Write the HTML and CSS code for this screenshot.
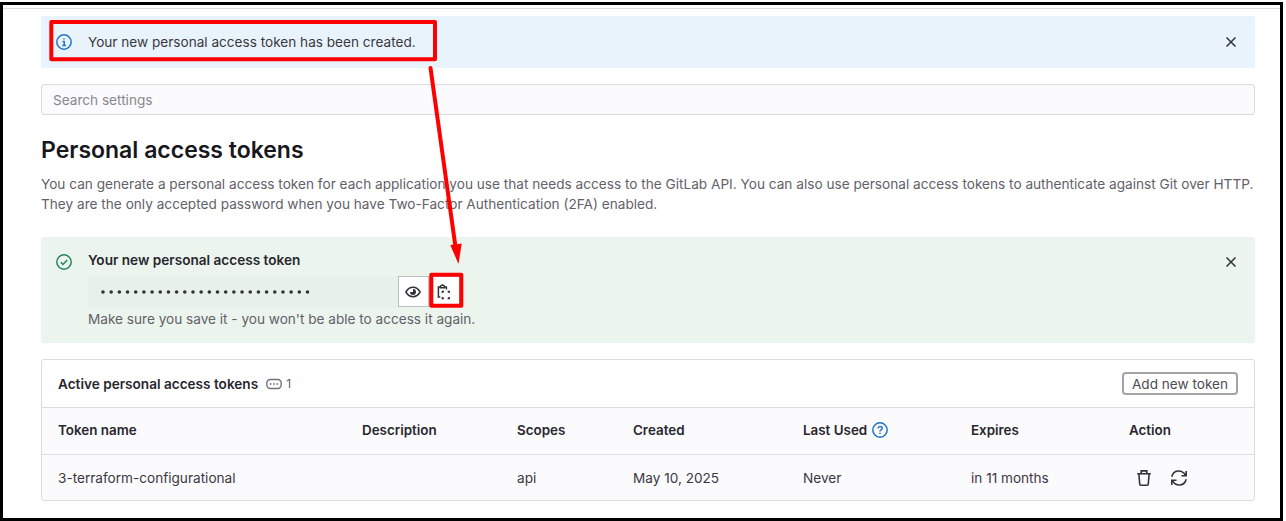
FILE: index.html
```html
<!DOCTYPE html>
<html lang="en">
<head>
<meta charset="utf-8">
<title>Personal access tokens</title>
<link rel="stylesheet" href="styles.css">
</head>
<body>
<div class="frame">
  <main class="page">
    <section class="alert alert-info">
      <svg class="icon blue" viewBox="0 0 16 16"><circle cx="8" cy="8" r="7.2"/><path d="M6.5 7.5H8.2V11.2M6.2 11.4H10M8 4.2V5.6" /></svg>
      <p class="alert-text">Your new personal access token has been created.</p>
      <svg class="icon close" viewBox="0 0 16 16"><path d="M3.5 3.5l9 9M12.5 3.5l-9 9"/></svg>
    </section>
    <div class="search">Search settings</div>
    <h1 class="title">Personal access tokens</h1>
    <p class="intro">You can generate a personal access token for each application you use that needs access to the GitLab API. You can also use personal access tokens to authenticate against Git over HTTP.<br>They are the only accepted password when you have Two-Factor Authentication (2FA) enabled.</p>
    <section class="alert alert-success">
      <svg class="icon green" viewBox="0 0 16 16"><circle cx="8" cy="8" r="7.2"/><path d="M4.8 8.2l2.2 2.2 4.2-4.3"/></svg>
      <div class="token">
        <h2 class="token-title">Your new personal access token</h2>
        <div class="token-row">
          <div class="token-value"><svg class="dots" viewBox="0 0 214 6"><path d="M3 3H210"/></svg></div>
          <button class="tool"><svg class="icon" viewBox="0 0 16 16"><path d="M.9 8C2.7 4.9 5.1 3.3 8 3.3S13.3 4.9 15.1 8C13.3 11.1 10.9 12.7 8 12.7S2.7 11.1.9 8z"/><path class="solid" d="M8 5a3 3 0 1 1-3 3h3z"/></svg></button>
          <button class="tool"><svg class="icon" viewBox="0 0 16 16"><path d="M4.3 13H2.4V3H4.2M8.6 3H10.4V5.6M4.4 3.8V2.2L6.4.9l2 1.3v1.6z"/><path d="M6.4 9V7.4H8M11.6 7.4H13.2V9M6.4 13V14.6H8M13.2 13V14.6H11.6"/></svg></button>
        </div>
        <p class="token-note">Make sure you save it - you won't be able to access it again.</p>
      </div>
      <svg class="icon close" viewBox="0 0 16 16"><path d="M3.5 3.5l9 9M12.5 3.5l-9 9"/></svg>
    </section>
    <section class="card">
      <header class="card-header">
        <h2 class="card-title">Active personal access tokens</h2>
        <svg class="icon count-icon" viewBox="0 0 16 16"><rect x=".8" y="3.5" width="14.4" height="9" rx="3.5"/><path d="M3.8 8h1.7M7.15 8h1.7M10.5 8h1.7"/></svg>
        <span class="count">1</span>
        <button class="add">Add new token</button>
      </header>
      <div class="row head">
        <span>Token name</span><span>Description</span><span>Scopes</span><span>Created</span>
        <span class="used">Last Used <svg class="icon blue" viewBox="0 0 16 16"><circle cx="8" cy="8" r="7.2"/><path d="M6 6.5C6 3.8 10.2 4.1 10.2 6.5 10.2 8 8 7.9 8 9.4M8 10.7v1.4"/></svg></span>
        <span>Expires</span><span>Action</span>
      </div>
      <div class="row body">
        <span>3-terraform-configurational</span><span></span><span>api</span><span>May 10, 2025</span><span>Never</span><span>in 11 months</span>
        <span class="actions">
          <svg class="icon" viewBox="0 0 16 16"><path d="M1.2 3.7h13.6M5.2 3.5V.9h5.6v2.6M2.9 4l.8 10q.1 1.2 1.3 1.2h6q1.2 0 1.3-1.2l.8-10"/></svg>
          <svg class="icon" viewBox="0 0 16 16"><path d="M.8 6.7C2.4-.3 11-.8 14.4 5.2M15.2 1v4.7h-4.7M15.2 9.3C13.6 16.3 5 16.8 1.6 10.8M.8 15v-4.7h4.7"/></svg>
        </span>
      </div>
    </section>
  </main>
  <svg class="markup" viewBox="0 0 1286 521">
    <rect x="51.3" y="22" width="383.7" height="37.3"/>
    <rect x="431.3" y="274.8" width="30" height="31"/>
    <path d="M430.5 68L455.5 247"/>
    <path class="arrow-head" d="M450.3 245L461.7 243.5L458.5 264z"/>
  </svg>
</div>
</body>
</html>
```
FILE: styles.css
```css
* { box-sizing: border-box; }
body { margin: 0; background: #fff; font-family: Inter, "Liberation Sans", sans-serif; font-size: 13.6px; color: #3a383f; }
h1, h2, p { margin: 0; }
.frame { width: 1283px; height: 519px; margin-top: 2px; border: 3px solid #000; position: relative; }
.page { border-top: 1px solid #dcdcde; margin-top: 3px; padding: 7px 25px 0 38px; }
.icon { display: block; flex: none; width: 16px; height: 16px; fill: none; stroke: #333238; stroke-width: 1.5; overflow: visible; }
.blue { stroke: #1f75cb; }
.green { stroke: #24865b; }
.close { margin-left: auto; }
.solid { fill: #333238; stroke: none; }
.alert { display: flex; padding-left: 15px; padding-right: 16px; border-radius: 3px; }
.alert-info { height: 52px; align-items: center; background: #e9f3fc; }
.alert-text { margin-left: 16px; }
.search { height: 31px; margin-top: 16px; border: 1px solid #dcdcde; border-radius: 3px; background: #fbfafd; padding-left: 11px; line-height: 30px; color: #89888d; }
.title { margin-top: 21px; font-size: 23px; line-height: 29px; font-weight: 600; color: #18171d; white-space: nowrap; }
.intro { margin-top: 9px; font-size: 13.64px; line-height: 20px; color: #626168; white-space: nowrap; }
.alert-success { height: 106px; margin-top: 23px; padding-top: 17px; background: #ecf4ee; }
.token { margin-left: 16px; }
.token-title, .card-title { font-size: 13.6px; line-height: 16px; font-weight: 600; color: #28272d; }
.alert-success .token-title { margin-top: -2px; }
.token-row { display: flex; margin-top: 8px; }
.token-value { width: 310px; height: 31px; padding: 13px 0 0 12px; background: #e7f0e9; }
.dots { display: block; width: 214px; height: 6px; fill: none; stroke: #333238; stroke-width: 3.6; stroke-linecap: round; stroke-dasharray: 0 8.18; }
.tool { width: 31px; height: 31px; padding: 0 0 0 6px; border: 1px solid #bfbfc3; background: #fff; }
.token-note { margin-top: 4px; line-height: 16px; color: #626168; }
.card { height: 142px; margin-top: 16px; border: 1px solid #dcdcde; border-radius: 3px; background: #fbfafd; }
.card-header { height: 48px; padding: 0 16px; display: flex; align-items: center; background: #fff; border-bottom: 1px solid #dcdcde; }
.count-icon { margin-left: 8px; stroke: #737278; stroke-width: 1.4; }
.count { margin-left: 4px; font-size: 12px; color: #626168; }
.add { margin-left: auto; width: 116px; height: 23px; padding: 0; border: 2px solid #a4a3a8; border-radius: 4px; background: #fff; font: inherit; color: #4c4b51; white-space: nowrap; }
.row { display: grid; grid-template-columns: 304px 155px 116px 170px 168px 158px 1fr; align-items: center; height: 47px; padding-left: 16px; white-space: nowrap; }
.head { padding-bottom: 2px; border-bottom: 1px solid #dcdcde; font-weight: 600; font-size: 13.4px; color: #28272d; }
.used { display: flex; align-items: center; gap: 5px; }
.actions { display: flex; gap: 19px; padding-left: 7px; }
.actions .icon { stroke-width: 1.6; }
.body { height: 46px; }
.markup { position: absolute; left: -3px; top: -5px; width: 1286px; height: 521px; fill: none; stroke: #f00; stroke-width: 4; stroke-linejoin: round; stroke-linecap: round; pointer-events: none; }
.arrow-head { fill: #f00; stroke: none; }
```
